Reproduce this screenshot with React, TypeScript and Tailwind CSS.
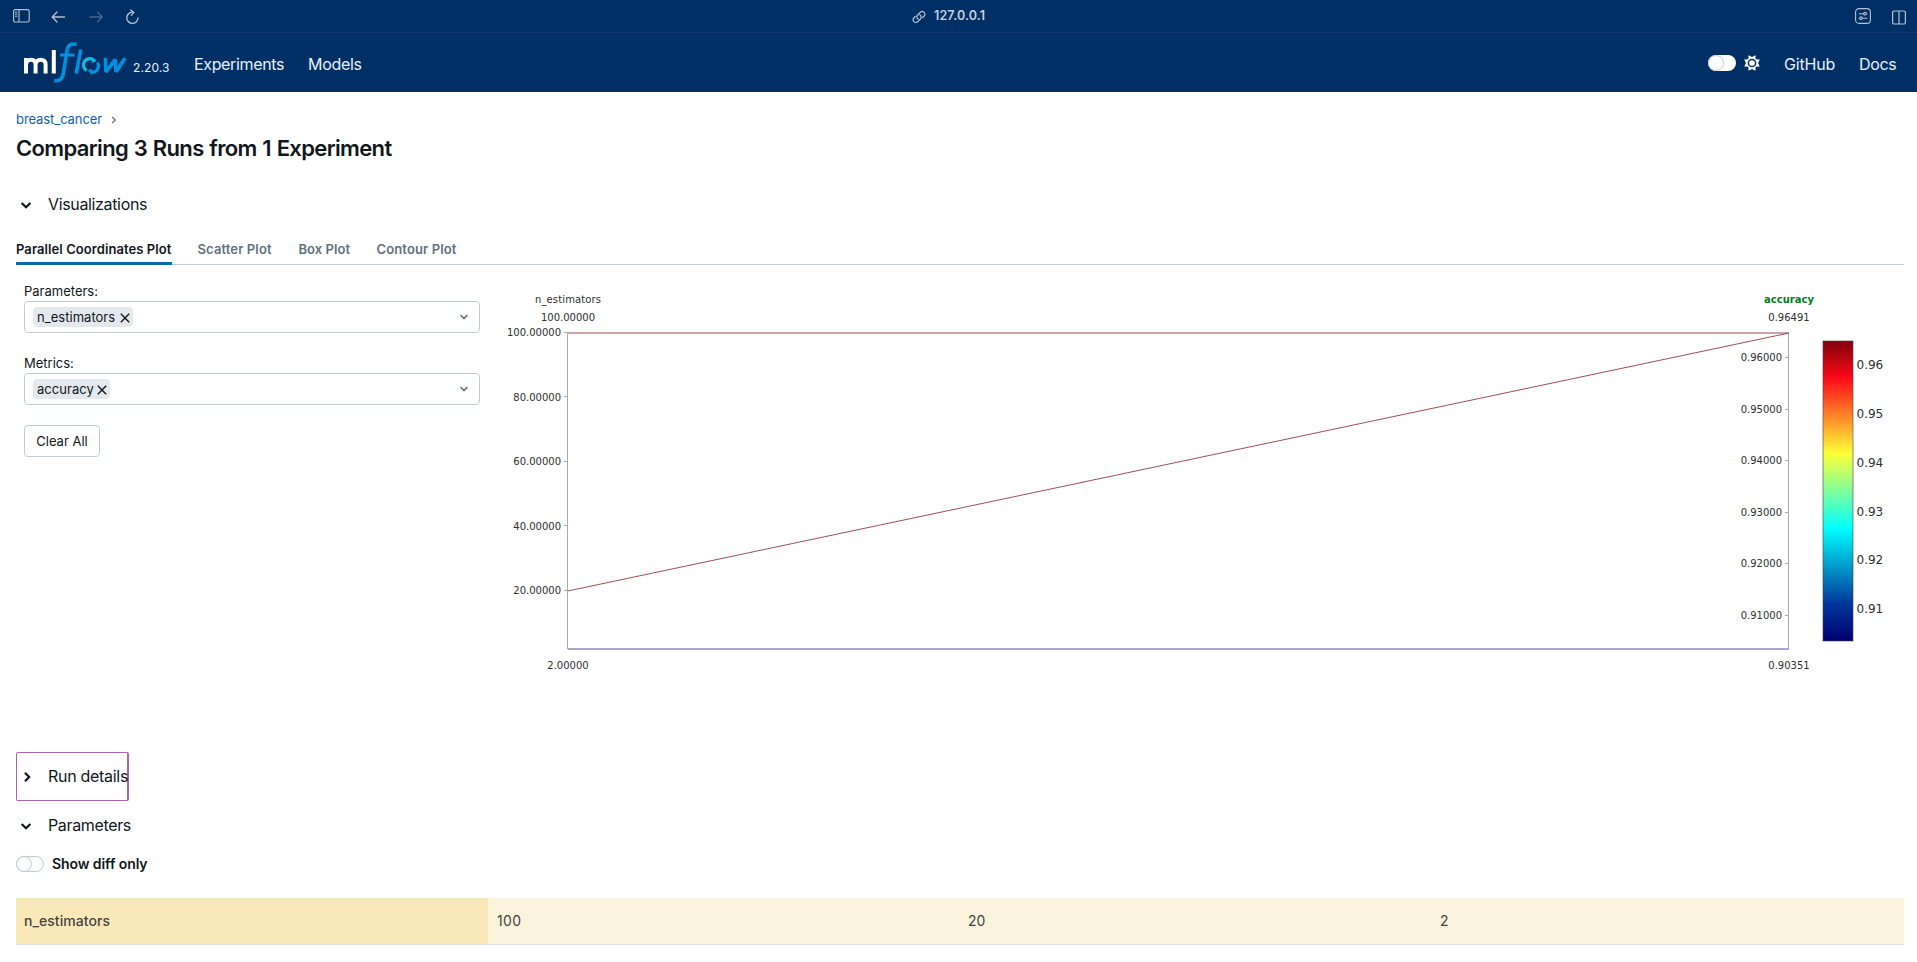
import { ChevronDown } from 'lucide-react';

const yN = (v: number) => 333 + ((100 - v) / 98) * 316;
const yA = (v: number) => 333 + ((0.96491 - v) / 0.0614) * 316;
const yC = (v: number) => 341 + ((0.96491 - v) / 0.0614) * 300;

function BrowserBar() {
  return (
    <div className="flex h-[33px] items-center border-b border-[#12386f] bg-[#002f65] text-[#b5c2d2]">
      <svg className="ml-[13px]" width="17" height="14" viewBox="0 0 17 14" fill="none" stroke="currentColor" strokeWidth="1.1">
        <rect x="0.6" y="0.6" width="15.6" height="12.4" rx="1.6" />
        <path d="M6 .6V13M2 3.2h2.3M2 5.2h2.3M2 7.2h2.3" />
      </svg>
      <svg className="ml-[21px] mt-px" width="15" height="12" viewBox="0 0 15 12" fill="none" stroke="currentColor" strokeWidth="1.3" strokeLinecap="round" strokeLinejoin="round">
        <path d="M13.5 6H1.3M6 1L1.2 6L6 11" />
      </svg>
      <svg className="ml-[23px] mt-px text-[#456690]" width="15" height="12" viewBox="0 0 15 12" fill="none" stroke="currentColor" strokeWidth="1.3" strokeLinecap="round" strokeLinejoin="round">
        <path d="M1 6H13.2M8.5 1L13.3 6L8.5 11" />
      </svg>
      <svg className="ml-[21px] mt-px" width="15" height="16" viewBox="0 0 15 16" fill="none" stroke="currentColor" strokeWidth="1.3" strokeLinecap="round" strokeLinejoin="round">
        <path d="M8.8 3.4A5.6 5.6 0 1 0 13 8.8M5.8 .9L8.9 3.4L6.4 6.4" />
      </svg>
      <svg className="ml-[772px] mt-[2px]" width="14" height="14" viewBox="0 0 14 14" fill="none" stroke="currentColor" strokeWidth="1.2" strokeLinecap="round">
        <path d="M6.2 9.2C4.6 8.2 4.4 6.2 5.6 5L8.4 2.2A2.7 2.7 0 0 1 12.2 6L10.8 7.5M7.8 4.8C9.4 5.8 9.6 7.8 8.4 9L5.6 11.8A2.7 2.7 0 0 1 1.8 8L3.2 6.5" />
      </svg>
      <span className="ml-[8px] mt-px w-[53px] whitespace-nowrap text-[12.5px] font-semibold tracking-[0.15px] text-[#c3cfdd]">127.0.0.1</span>
      <svg className="ml-auto" width="16" height="16" viewBox="0 0 16 16" fill="none" stroke="currentColor" strokeWidth="1.1">
        <rect x="0.6" y="0.6" width="14.8" height="14.8" rx="3.4" />
        <path d="M4 5.7h4.7M11.4 5.7h1M3.7 10.2h1M7.4 10.2h4.8" />
        <circle cx="10" cy="5.7" r="1.3" />
        <circle cx="6" cy="10.2" r="1.3" />
      </svg>
      <svg className="ml-[21px] mr-[11px] mt-[2px]" width="14" height="15" viewBox="0 0 14 15" fill="none" stroke="currentColor" strokeWidth="1.2">
        <rect x="0.6" y="1" width="12.8" height="13" rx="1.6" />
        <path d="M7 1V14" />
      </svg>
    </div>
  );
}

function Logo() {
  return (
    <svg width="106" height="42" viewBox="0 0 106 42" fill="none">
      <g stroke="#fff">
        <path d="M3 31.5V16M3 22.5Q3.6 17.7 7.8 17.7Q12.6 17.7 12.6 22.5V31.5M12.6 22.5Q13.2 17.7 17.4 17.7Q22.6 17.7 22.6 22.5V31.5" strokeWidth="4" />
        <path d="M30.8 31.5V8" strokeWidth="4" />
      </g>
      <g stroke="#0090e0">
        <path d="M53.6 2.4Q45.6 0.2 44 8.5L40.4 31Q38.9 40.2 31.4 38.4" strokeWidth="3.6" />
        <path d="M37 13H51.6" strokeWidth="3" />
        <path d="M57.8 7.5L53.2 31.5" strokeWidth="3.6" />
      </g>
      <g strokeWidth="3.2">
        <path d="M63.6 28.4A6.2 6.2 0 0 1 70 17.6" stroke="#12bce2" />
        <path d="M74.4 20.6A6.2 6.2 0 0 1 67.6 30" stroke="#0090e0" />
        <path d="M69.6 15.2L73.6 18.8L69 21.2Z" fill="#12bce2" />
        <path d="M68.8 32.4L64.6 28.6L69.2 26.4Z" fill="#0090e0" />
      </g>
      <path d="M82.4 16.2L83 29.8L92.2 17.6L93 29.8L102 16.2" stroke="#0090e0" strokeWidth="3.6" strokeLinejoin="bevel" />
    </svg>
  );
}

function Header() {
  return (
    <header className="flex h-[59px] items-center bg-[#002f65] pt-px text-[16px] text-[#e6f1fb]">
      <div className="-mt-px ml-[23px] flex h-[42px] w-[106px]"><Logo /></div>
      <span className="ml-1 mt-[9px] w-[37px] whitespace-nowrap text-[12px] tracking-[0.1px]">2.20.3</span>
      <a className="ml-[24px] mt-px w-[90px] whitespace-nowrap tracking-[-0.35px]">Experiments</a>
      <a className="ml-[24px] mt-px w-[53px] whitespace-nowrap tracking-[-0.3px]">Models</a>
      <span className="ml-auto flex h-4 w-7 rounded-full bg-white">
        <span className="h-4 w-4 rounded-full border border-[#c0cdd8]" />
      </span>
      <svg className="ml-2" width="16" height="16" viewBox="0 0 16 16">
        <path d="M8 2L11.4 0.2L11.7 4.3L15.8 4.6L14 8L15.8 11.4L11.7 11.7L11.4 15.8L8 14L4.6 15.8L4.3 11.7L.2 11.4L2 8L.2 4.6L4.3 4.3L4.6 .2Z" fill="#fff" />
        <circle cx="8" cy="8" r="3.6" fill="none" stroke="#002f65" strokeWidth="1.5" />
      </svg>
      <a className="ml-[24px] mt-px w-[51px] whitespace-nowrap tracking-[-0.2px]">GitHub</a>
      <a className="ml-[24px] mr-[21px] mt-px w-[37px] whitespace-nowrap tracking-[-0.35px]">Docs</a>
    </header>
  );
}

function Select({ label, value, tag }: { label: string; value: string; tag: string }) {
  return (
    <div className="h-[72px]">
      <div className="h-[20px] text-[13px] leading-[21px]">{label}</div>
      <div className="flex h-8 w-[456px] items-center rounded border border-[#c0cdd8] pl-2 pr-[9px]">
        <span className={`flex h-5 items-center justify-between rounded bg-[#e4e9ed] pl-1 pr-[3px] text-[13px] ${tag}`}>
          <span className="pt-px tracking-[0.03px]">{value}</span>
          <svg className="mt-[2px]" width="10" height="10" viewBox="0 0 10 10" stroke="#11171c" strokeWidth="1.4"><path d="M.8.8L9.2 9.2M9.2.8L.8 9.2" /></svg>
        </span>
        <ChevronDown className="ml-auto text-[#5f7281]" size={12} strokeWidth={3.4} />
      </div>
    </div>
  );
}

function Chart() {
  return (
    <svg width="1424" height="400" viewBox="488 280 1424 400" fontFamily="'DejaVu Sans', Verdana, sans-serif" fontSize="10" fill="#2f2f2f">
      <defs>
        <linearGradient id="jet" x1="0" y1="0" x2="0" y2="1">
          <stop offset="0" stopColor="#80000a" />
          <stop offset=".125" stopColor="#ff0a18" />
          <stop offset=".375" stopColor="#ffff38" />
          <stop offset=".625" stopColor="#00ffff" />
          <stop offset=".875" stopColor="#00379a" />
          <stop offset="1" stopColor="#000070" />
        </linearGradient>
      </defs>
      <g stroke="#ababab" strokeWidth="1">
        <path d="M567.5 332V649M1788.5 332V649" />
        {[100, 80, 60, 40, 20].map((v) => <path key={v} d={`M564 ${Math.round(yN(v)) - 0.5}H567`} />)}
        {[0.96, 0.95, 0.94, 0.93, 0.92, 0.91].map((v) => <path key={v} d={`M1785 ${Math.round(yA(v)) - 0.5}H1788`} />)}
      </g>
      <path d="M568 333H1789" stroke="#cba7ab" strokeWidth="2" />
      <path d="M568 649H1789" stroke="#a9a6ca" strokeWidth="2" />
      <path d={`M568 ${yN(20)}L1789 333`} stroke="#8f3c45" strokeWidth=".9" />
      {[100, 80, 60, 40, 20].map((v) => (
        <text key={v} x="561" y={yN(v) + 3.2} textAnchor="end">{v.toFixed(5)}</text>
      ))}
      {[0.96, 0.95, 0.94, 0.93, 0.92, 0.91].map((v) => (
        <g key={v}>
          <text x="1782" y={yA(v) + 3} textAnchor="end">{v.toFixed(5)}</text>
          <text x="1856.5" y={yC(v) + 4} fontSize="12">{v.toFixed(2)}</text>
        </g>
      ))}
      <g textAnchor="middle">
        <text x="568" y="303" textLength="66">n_estimators</text>
        <text x="568" y="321">100.00000</text>
        <text x="568" y="669">2.00000</text>
        <text x="1789" y="303" fontWeight="bold" fill="#007c1c">accuracy</text>
        <text x="1789" y="321">0.96491</text>
        <text x="1789" y="669">0.90351</text>
      </g>
      <rect x="1823" y="341" width="30" height="300" fill="url(#jet)" stroke="#444" strokeOpacity=".6" />
    </svg>
  );
}

function Arrow({ right = false }: { right?: boolean }) {
  return (
    <svg className="mt-px shrink-0" width="12" height="12" viewBox="0 0 12 12" fill="none" stroke="#11171c" strokeWidth="2.2">
      <path d={right ? 'M4 1.7L8.2 6L4 10.3' : 'M1.6 4L6 8.2L10.4 4'} />
    </svg>
  );
}

export default function App() {
  return (
    <div className="h-[962px] overflow-hidden bg-white font-[Inter,sans-serif] text-[#11171c]">
      <BrowserBar />
      <Header />
      <main className="pl-4 pr-[13px]">
        <div className="mt-[17px] flex h-[20px] items-center text-[13px] text-[#0e63a5]">
          <span className="w-[86px] whitespace-nowrap pt-px tracking-[-0.08px]">breast_cancer</span>
          <svg className="ml-[9px] mt-px" width="6" height="8" viewBox="0 0 6 8" fill="none" stroke="#5f7281" strokeWidth="1.2"><path d="M1.2 1L4.4 4L1.2 7" /></svg>
        </div>
        <h1 className="mt-[3px] h-8 whitespace-nowrap text-[22px] font-semibold leading-8 tracking-[-0.65px] [word-spacing:0.8px]">Comparing 3 Runs from 1 Experiment</h1>
        <div className="mt-[28px] flex h-6 items-center pl-1 text-[16px]">
          <Arrow /><span className="ml-4 whitespace-nowrap tracking-[-0.35px]">Visualizations</span>
        </div>
        <div className="mt-[21px] flex h-[28px] border-b border-[#c0cdd8] text-[13px] font-semibold leading-[24px] text-[#5f7281]">
          <span className="-mb-px h-[28px] w-[156px] whitespace-nowrap border-b-[3px] border-[#0e68ae] tracking-[0.08px] text-[#11171c]">Parallel Coordinates Plot</span>
          <span className="ml-[25.5px] w-[76px] whitespace-nowrap tracking-[0.12px]">Scatter Plot</span>
          <span className="ml-[25px] w-[53px] whitespace-nowrap tracking-[0.05px]">Box Plot</span>
          <span className="ml-[25px] whitespace-nowrap tracking-[0.12px]">Contour Plot</span>
        </div>
        <div className="flex h-[472px]">
          <div className="w-[472px] shrink-0 pl-2 pt-4">
            <Select label="Parameters:" value="n_estimators" tag="w-[100px]" />
            <Select label="Metrics:" value="accuracy" tag="w-[77px]" />
            <button className="flex h-8 w-[76px] items-center justify-center whitespace-nowrap rounded border border-[#c0cdd8] pt-[2px] text-[13px]">Clear All</button>
          </div>
          <div className="w-[1416px] shrink-0 pt-[15px]"><Chart /></div>
        </div>
        <div className="mt-[15px] flex h-[49px] w-[113px] items-center whitespace-nowrap rounded-[2px] border border-r-2 border-[#a866aa] pl-1 text-[16px]">
          <Arrow right /><span className="-mt-px ml-[15px] tracking-[-0.3px]">Run details</span>
        </div>
        <div className="mt-[12px] flex h-6 items-center pl-1 text-[16px]">
          <Arrow /><span className="ml-4 tracking-[-0.35px]">Parameters</span>
        </div>
        <div className="mt-[17px] flex h-[20px] items-center">
          <span className="flex h-4 w-7 items-center rounded-full border border-[#c0cdd8]">
            <span className="-ml-px h-4 w-4 rounded-full border border-[#c0cdd8]" />
          </span>
          <span className="-mt-px ml-2 text-[14px] font-semibold tracking-[-0.08px]">Show diff only</span>
        </div>
        <div className="mt-[24px] flex h-[47px] w-[1888px] items-center border-b border-[#dfe2e3] text-[14px] text-[#444]">
          <div className="flex h-full w-[472px] items-center bg-[#fae9b8] pb-px pl-2 font-medium tracking-[0.05px]">n_estimators</div>
          <div className="flex h-full flex-1 items-center bg-[#fcf3dc] pb-px">
            <span className="w-[472px] pl-[9px] tracking-[0.3px]">100</span>
            <span className="w-[472px] pl-2">20</span>
            <span className="pl-2">2</span>
          </div>
        </div>
      </main>
    </div>
  );
}
